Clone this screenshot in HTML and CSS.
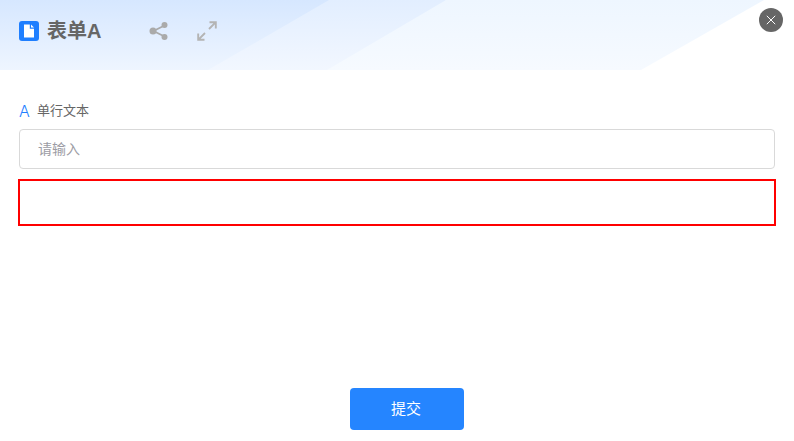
FILE: index.html
```html
<!DOCTYPE html>
<html lang="zh-CN">
<head>
  <meta charset="UTF-8" />
  <title>表单A</title>
  <link rel="stylesheet" href="styles.css">
</head>
<body>
  <div class="page">
    <header class="head">
      <div class="head-band"></div>
      <div class="head-title">
        <svg class="file-icon" viewBox="0 0 20 20" width="20" height="20">
          <rect width="20" height="20" rx="3" fill="#1f7fff"/>
          <path d="M5 3.500h5.800v4.200h4.200v8.800h-10z" fill="#fff"/>
          <path d="M12 3.500l3 3h-3z" fill="#fff"/>
        </svg>
        <h1>表单A</h1>
      </div>
      <div class="head-tools">
        <svg viewBox="0 0 20 20" width="20" height="20">
          <path d="M15.500 4.500L4.500 10l11 5.500" fill="none" stroke="#aaa" stroke-width="1.800"/>
          <circle cx="15.500" cy="4" r="3" fill="#aaa"/>
          <circle cx="4" cy="10" r="3.500" fill="#aaa"/>
          <circle cx="15.500" cy="16" r="3" fill="#aaa"/>
        </svg>
        <svg viewBox="0 0 20 20" width="20" height="20">
          <path d="M12.500 1.200h6.300v6.300M18.800 1.200l-6.800 6.800M1.200 12.500v6.300h6.300M1.200 18.800l6.800-6.800" fill="none" stroke="#b4b4b4" stroke-width="1.900"/>
        </svg>
      </div>
    </header>

    <button class="close-btn" aria-label="关闭">
      <svg viewBox="0 0 10 10" width="10" height="10">
        <path d="M.8.8l8.400 8.400M9.200.8L.8 9.200" stroke="#fff" stroke-width="1" fill="none"/>
      </svg>
    </button>

    <form class="form">
      <label class="field-label"><span class="field-icon">A</span>单行文本</label>
      <input class="field-input" type="text" placeholder="请输入" />
      <div class="error-box"></div>
      <div class="form-foot">
        <button class="submit-btn" type="button">提交</button>
      </div>
    </form>
  </div>
</body>
</html>
```

FILE: styles.css
```css
html, body {
  margin: 0;
  height: 100%;
  background: #fff;
}
body {
  font-family: "Liberation Sans", "Noto Sans CJK SC", sans-serif;
  overflow: hidden;
}
.page {
  position: relative;
  width: 794px;
  height: 441px;
  display: flex;
  flex-direction: column;
}
/* Header with the slanted bands */
.head {
  position: relative;
  height: 70px;
  display: flex;
  align-items: center;
  padding: 0 0 8px 19px;
  box-sizing: border-box;
  overflow: hidden;
  background: #fff;
}
.head::before {
  content: "";
  position: absolute;
  inset: 0;
  background: linear-gradient(180deg, #eef6ff, #f6faff);
  clip-path: polygon(0 0, 764px 0, 641px 70px, 0 70px);
}
.head::after {
  content: "";
  position: absolute;
  inset: 0;
  background: linear-gradient(180deg, #e2eeff, #f2f7ff);
  clip-path: polygon(0 0, 446px 0, 327px 70px, 0 70px);
}
.head-band {
  position: absolute;
  inset: 0;
  z-index: 1;
  background: linear-gradient(180deg, #d6e7ff, #eef5ff);
  clip-path: polygon(0 0, 329px 0, 208px 70px, 0 70px);
}
.head-title, .head-tools {
  position: relative;
  z-index: 2;
  display: flex;
  align-items: center;
}
.head-title {
  width: 130px;
  gap: 8px;
}
.head-title h1 {
  margin: 0 0 1px;
  font-size: 20px;
  font-weight: bold;
  line-height: 20px;
  color: #666;
}
.head-tools {
  gap: 28px;
}
.close-btn {
  position: absolute;
  top: 8px;
  left: 759px;
  width: 24px;
  height: 24px;
  padding: 0;
  border: none;
  border-radius: 50%;
  background: #666;
  display: flex;
  align-items: center;
  justify-content: center;
}
/* Form */
.form {
  flex: 1;
  display: flex;
  flex-direction: column;
  padding: 33px 18px 11px;
}
.field-label {
  display: flex;
  align-items: center;
  height: 16px;
  margin: 0 0 1px 1px;
  font-size: 13px;
  line-height: 16px;
  color: #666;
}
.field-icon {
  width: 18px;
  font-family: "Inter", sans-serif;
  font-weight: 300;
  font-size: 16px;
  color: #1f7fff;
}
.field-input {
  height: 40px;
  margin: 9px 1px 10px;
  padding: 0 18px;
  box-sizing: border-box;
  border: 1px solid #d9d9d9;
  border-radius: 4px;
  font-family: inherit;
  font-size: 14px;
  outline: none;
}
.field-input::placeholder {
  color: #9c9ca4;
}
.error-box {
  height: 47px;
  box-sizing: border-box;
  border: 2px solid #f00;
}
.form-foot {
  margin-top: auto;
  padding-left: 20px;
  display: flex;
  justify-content: center;
}
.submit-btn {
  width: 114px;
  height: 42px;
  border: none;
  border-radius: 4px;
  background: #2585ff;
  color: #fff;
  font-family: inherit;
  font-size: 15px;
  padding: 0 2px 3px 0;
}
```
